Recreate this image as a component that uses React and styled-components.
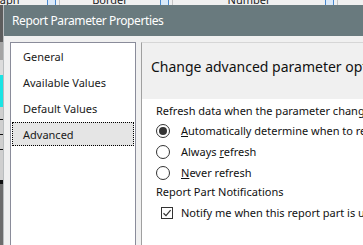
import React from 'react'
import styled, { createGlobalStyle } from 'styled-components'

const GlobalStyle = createGlobalStyle`
  html, body { margin: 0; padding: 0; }
  body {
    background: #f0f0f0;
    font-family: "Noto Sans", "Open Sans", sans-serif;
  }
`

const Page = styled.div`
  width: 363px;
  height: 245px;
  overflow: hidden;
  display: flex;
  flex-direction: column;
  background: #6a6a6a;
`

const BackHeader = styled.div`
  height: 5px;
  flex-shrink: 0;
  overflow: hidden;
  background: #f0f0f0;
`

const BackHeaderRow = styled.div`
  display: flex;
  height: 20px;
  margin-top: -10px;
  font-size: 11px;
  line-height: 20px;
  color: #222;
`

const BackColumn = styled.div`
  width: ${p => p.$w}px;
  margin-left: ${p => p.$offset || 0}px;
  flex-shrink: 0;
  display: flex;
  align-items: center;
  border-right: 1px solid #c4c4c4;
  box-sizing: border-box;
  padding-right: 3px;
`

const BackLabel = styled.span`
  flex: 1;
  text-align: center;
`

const FilterIcon = styled.span`
  width: 7px;
  height: 14px;
  margin-top: 4px;
  border: 1px solid #4a8ad0;
  background: #dbe9f8;
`

const Main = styled.div`
  flex: 1;
  display: flex;
  min-height: 0;
`

const BackStrip = styled.div`
  width: 3px;
  flex-shrink: 0;
  display: flex;
  flex-direction: column;
`

const StripPart = styled.div`
  height: ${p => p.$h}px;
  flex-shrink: 0;
  background: ${p => p.$c};
  border-bottom: ${p => (p.$line ? '1px solid #111' : 'none')};
`

const Dialog = styled.div`
  flex: 1;
  display: flex;
  flex-direction: column;
  border-left: 1px solid #b9bdbf;
  background: #f0f0f0;
`

const TitleBar = styled.div`
  height: 31px;
  flex-shrink: 0;
  background: #697a7e;
  color: #fff;
  font-size: 12px;
  line-height: 31px;
  padding-left: 8px;
  letter-spacing: -0.4px;
`

const Body = styled.div`
  flex: 1;
  display: flex;
  padding: 6px 0 0 6px;
  min-height: 0;
`

const NavList = styled.div`
  width: 126px;
  flex-shrink: 0;
  box-sizing: border-box;
  background: #fff;
  border: 1px solid #8a8c9a;
  border-bottom: none;
  padding-top: 1px;
`

const NavItem = styled.div`
  height: 24px;
  margin: 0 1px 2px;
  box-sizing: border-box;
  padding-left: 10px;
  display: flex;
  align-items: center;
  font-size: 11px;
  color: #1a1a1a;
  background: ${p => (p.$active ? '#e5e5e5' : 'transparent')};
  border: 1px dotted ${p => (p.$active ? '#000' : 'transparent')};
`

const Panel = styled.div`
  flex: 1;
  margin-left: 5px;
  display: flex;
  flex-direction: column;
  border-left: 1px solid #a0a0a0;
  border-top: 1px solid #d6d6d6;
`

const PanelHeader = styled.div`
  height: 56px;
  flex-shrink: 0;
  box-sizing: border-box;
  padding: 13px 0 0 9px;
  font-size: 14px;
  line-height: 22px;
  color: #111;
  white-space: nowrap;
`

const PanelContent = styled.div`
  flex: 1;
  background: #fff;
  padding: 3px 0 0 14px;
  font-size: 11px;
  color: #111;
  white-space: nowrap;
`

const Label = styled.div`
  height: ${p => p.$h || 18}px;
  line-height: ${p => p.$h || 18}px;
`

const OptionRow = styled.div`
  height: ${p => p.$h || 21}px;
  display: flex;
  align-items: center;
  padding-left: ${p => p.$indent || 0}px;
`

const Radio = styled.span`
  width: 14px;
  height: 14px;
  box-sizing: border-box;
  border-radius: 50%;
  border: 1px solid #333;
  background: #fff;
  display: flex;
  align-items: center;
  justify-content: center;
  margin-right: 11px;
  flex-shrink: 0;

  &::after {
    content: '';
    width: 8px;
    height: 8px;
    border-radius: 50%;
    background: ${p => (p.$checked ? '#333' : 'transparent')};
  }
`

const Checkbox = styled.span`
  width: 12px;
  height: 12px;
  box-sizing: border-box;
  border: 1px solid #333;
  background: #fff;
  display: flex;
  align-items: center;
  justify-content: center;
  margin-right: 8px;
  flex-shrink: 0;
`

const navItems = ['General', 'Available Values', 'Default Values', 'Advanced']

export default function App() {
  return (
    <>
      <GlobalStyle />
      <Page>
        <BackHeader>
          <BackHeaderRow>
            <BackColumn $w={100} $offset={-40}>
              <BackLabel>Graph</BackLabel>
              <FilterIcon />
            </BackColumn>
            <BackColumn $w={113}>
              <BackLabel>Border</BackLabel>
              <FilterIcon />
            </BackColumn>
            <BackColumn $w={165}>
              <BackLabel>Number</BackLabel>
              <FilterIcon />
            </BackColumn>
          </BackHeaderRow>
        </BackHeader>
        <Main>
          <BackStrip>
            <StripPart $h={37} $c="#5d5d5d" />
            <StripPart $h={18} $c="#a4a4a4" />
            <StripPart $h={15} $c="#dcdcdc" />
            <StripPart $h={32} $c="#1ae4e4" />
            <StripPart $h={12} $c="#cfcfcf" $line />
            <StripPart $h={14} $c="#cfcfcf" $line />
            <StripPart $h={14} $c="#cfcfcf" $line />
            <StripPart $h={30} $c="#cfcfcf" />
            <StripPart $h={4} $c="#111" />
            <StripPart $h={64} $c="#6c6c6c" />
          </BackStrip>
          <Dialog>
            <TitleBar>Report Parameter Properties</TitleBar>
            <Body>
              <NavList>
                {navItems.map(item => (
                  <NavItem key={item} $active={item === 'Advanced'}>{item}</NavItem>
                ))}
              </NavList>
              <Panel>
                <PanelHeader>Change advanced parameter options</PanelHeader>
                <PanelContent>
                  <Label>Refresh data when the parameter changes</Label>
                  <OptionRow>
                    <Radio $checked />
                    <span><u>A</u>utomatically determine when to refresh</span>
                  </OptionRow>
                  <OptionRow>
                    <Radio />
                    <span>Always <u>r</u>efresh</span>
                  </OptionRow>
                  <OptionRow>
                    <Radio />
                    <span><u>N</u>ever refresh</span>
                  </OptionRow>
                  <Label $h={17}>Report Part Notifications</Label>
                  <OptionRow $h={25} $indent={5}>
                    <Checkbox>
                      <svg width="10" height="10" viewBox="0 0 10 10">
                        <path d="M1.5 5.2 L4 7.6 L8.6 2.2" fill="none" stroke="#333" strokeWidth="1.2" />
                      </svg>
                    </Checkbox>
                    <span>Notify me when this report part is updated</span>
                  </OptionRow>
                </PanelContent>
              </Panel>
            </Body>
          </Dialog>
        </Main>
      </Page>
    </>
  )
}
